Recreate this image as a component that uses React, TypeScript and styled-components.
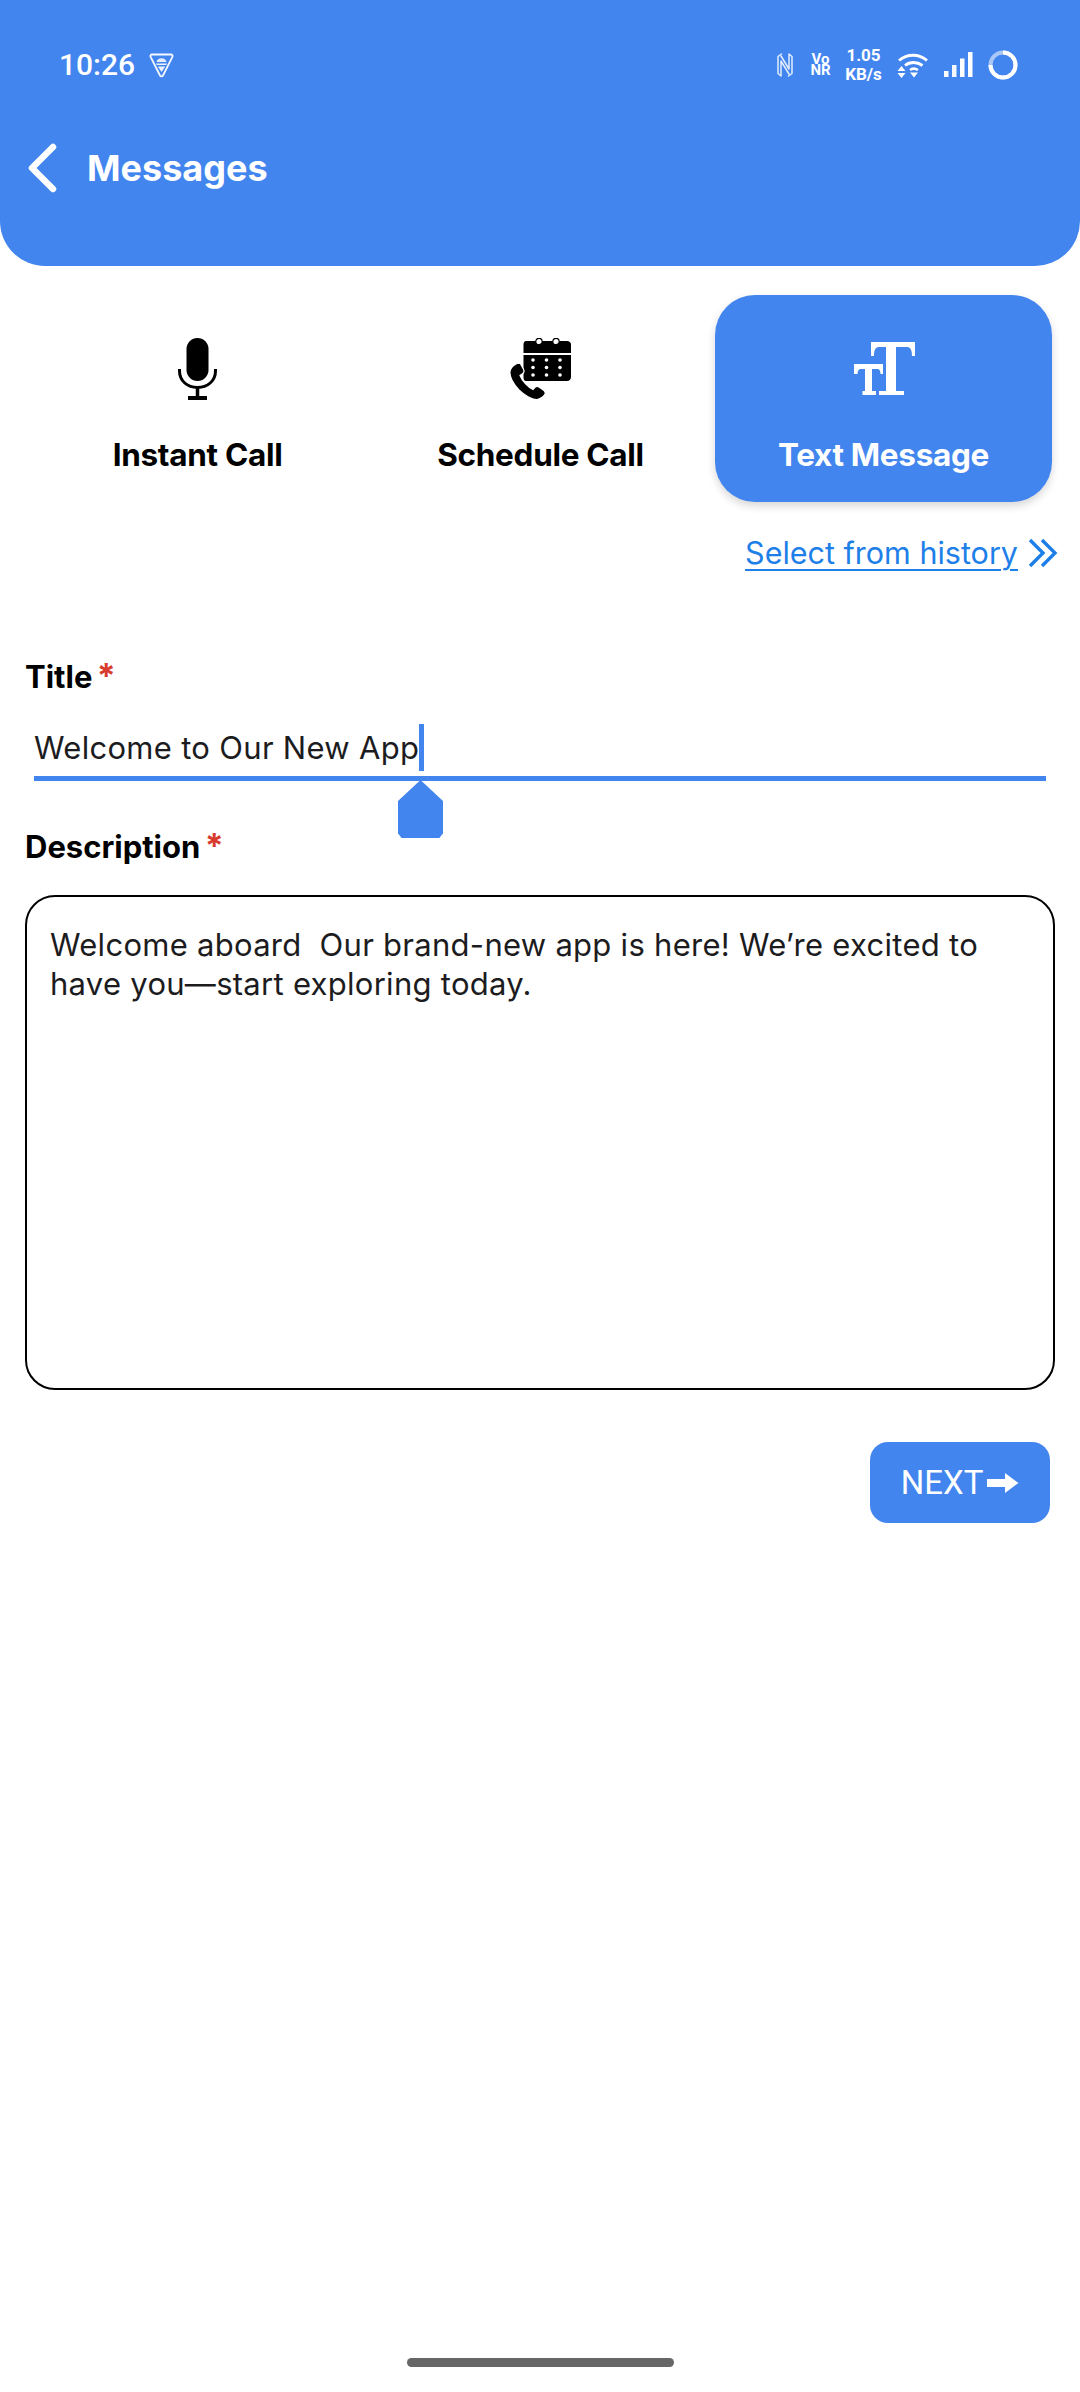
import styled, { createGlobalStyle } from 'styled-components';

const BLUE = '#4285ef';

const GlobalStyle = createGlobalStyle`
  html, body {
    margin: 0;
    padding: 0;
    background: #fff;
  }
  * {
    box-sizing: border-box;
  }
`;

function ShieldIcon() {
  return (
    <svg width="25" height="25" viewBox="0 0 25 25" fill="none">
      <path d="M3 1.500h19c1.300 0 2 1.200 1.400 2.300L14 22.500c-.7 1.200-2.300 1.200-3 0L1.600 3.800C1 2.700 1.700 1.500 3 1.500z" stroke="#fff" strokeWidth="1.800" opacity="0.95" />
      <path d="M7.500 9c.4-2.300 2.300-3.700 5-3.700s4.600 1.400 5 3.700z" fill="#fff" opacity="0.85" />
      <path d="M7 10.500h11l-.8 1.600H7.800zM8.800 13.500h7.400l-3.700 5.500z" fill="#fff" opacity="0.9" />
    </svg>
  );
}

function NfcIcon() {
  return (
    <svg width="16" height="26" viewBox="0 0 16 26" fill="none" stroke="#fff" strokeWidth="1.500" strokeLinecap="round" strokeLinejoin="round">
      <path d="M4.500 2 1 4.500v17L4 24V9l8 13" opacity="0.85" />
      <path d="M11.500 24l3.500-2.500v-17L12 2v15l-8-13" opacity="0.85" />
    </svg>
  );
}

function WifiIcon() {
  return (
    <svg width="32" height="28" viewBox="0 0 32 28" fill="none">
      <path d="M2 9.500C10 2.500 22 2.500 30 9.500" stroke="#fff" strokeWidth="2.800" />
      <path d="M8 14.500C13 10.500 20 10.500 25.500 14.500" stroke="#fff" strokeWidth="2.800" />
      <path d="M13 19c2.500-1.800 5-1.800 8 0" stroke="#fff" strokeWidth="2.600" />
      <path d="M4.500 15 8.500 20h-8zM.5 22h8l-4 5zM13 21.500h8l-4 5z" fill="#fff" />
    </svg>
  );
}

function SignalIcon() {
  return (
    <svg width="29" height="26" viewBox="0 0 29 26" fill="#fff">
      <rect x="0" y="19" width="4.500" height="6" />
      <rect x="8" y="13" width="4.500" height="12" opacity="0.95" />
      <rect x="16" y="6.500" width="4.500" height="18.500" />
      <rect x="24" y="0" width="4.500" height="25" />
    </svg>
  );
}

function BatteryRing() {
  return (
    <svg width="30" height="30" viewBox="0 0 30 30" fill="none">
      <circle cx="15" cy="15" r="12.500" stroke="#fff" strokeOpacity="0.55" strokeWidth="4" />
      <path d="M15 2.500A12.500 12.500 0 1 1 2.500 15" stroke="#fff" strokeWidth="4" />
    </svg>
  );
}

function BackIcon() {
  return (
    <svg width="30" height="50" viewBox="0 0 30 50" fill="none">
      <path d="M25 4 4 25l21 21" stroke="#fff" strokeWidth="6.500" strokeLinecap="round" strokeLinejoin="round" />
    </svg>
  );
}

function MicIcon() {
  return (
    <svg width="39" height="62" viewBox="0 0 39 62" fill="none">
      <rect x="8.500" y="0" width="22" height="43" rx="11" fill="#000" />
      <path d="M1.500 31v2c0 10 8 16.500 18 16.500S37.500 43 37.500 33v-2" stroke="#000" strokeWidth="3" />
      <path d="M19.500 49v10" stroke="#000" strokeWidth="3.500" />
      <path d="M10 60h19" stroke="#000" strokeWidth="4" />
    </svg>
  );
}

function CalendarPhoneIcon() {
  const dots = [23, 36.500, 50].flatMap((x) => [22, 29.500, 37].map((y) => ({ x, y })));
  return (
    <svg width="61" height="62" viewBox="0 0 61 62" fill="#000">
      <path d="M16 3h41c2 0 4 1.500 4 3.500V15H13.500V6.500C13.500 4.500 14.500 3 16 3z" />
      <path d="M13.500 17H61v22c0 2-1.500 4-4 4H16c-2 0-2.500-2-2.500-4z" />
      <circle cx="29" cy="3.500" r="3.200" fill="#fff" stroke="#000" strokeWidth="1.200" />
      <circle cx="46" cy="3.500" r="3.200" fill="#fff" stroke="#000" strokeWidth="1.200" />
      {dots.map((d) => (
        <circle key={`${d.x}-${d.y}`} cx={d.x} cy={d.y} r="1.800" fill="#fff" />
      ))}
      <path
        d="M7 25.500c-3 1.500-6.500 5-7 8-.6 5 3 12 9 18.500 5 5 13 10 18 9.500 3-.3 7-3 8-5.500.5-1.500 0-2.500-1-3.500l-5-3.500c-1.500-1-3-.8-4 .3l-2 2.200c-5-2.200-11-9-13-14l2.800-2c1.200-1 1.500-2.500.8-4l-3-5.500c-.5-1-1-1-1.600-.5z"
        stroke="#fff"
        strokeWidth="1.200"
      />
    </svg>
  );
}

function FontSizeIcon() {
  return (
    <svg width="62" height="54" viewBox="0 0 62 54" fill="#fff">
      <path d="M18 0h44v14h-3c0-5-1-9-5-9H43v44h8v4H26v-4h7V5H26c-4 0-5 4-5 9h-3z" />
      <path d="M1 22h29v10h-2.500c0-3-1-5-3-5H19v22h4v4H9.500v-4H12V27H8c-2.500 0-3.500 2-3.500 5H1z" />
    </svg>
  );
}

function DoubleChevronIcon() {
  return (
    <svg width="30" height="30" viewBox="0 0 30 30" fill="none" stroke="#1e7fe8" strokeWidth="3.400">
      <path d="M2 2l13 13L2 28" />
      <path d="M14 2l13 13-13 13" />
    </svg>
  );
}

function ArrowIcon() {
  return (
    <svg width="32" height="20" viewBox="0 0 32 20" fill="#fff">
      <path d="M0 6h18V0l13.500 10L18 20v-6H0z" />
    </svg>
  );
}

export default function App() {
  return (
    <Page>
      <GlobalStyle />
      <Header>
        <StatusBar>
          <StatusLeft>
            <Clock>10:26</Clock>
            <ShieldIcon />
          </StatusLeft>
          <StatusRight>
            <NfcIcon />
            <VoNrText>
              Vo
              <br />
              NR
            </VoNrText>
            <SpeedText>
              1.05
              <br />
              KB/s
            </SpeedText>
            <WifiIcon />
            <SignalIcon />
            <BatteryRing />
          </StatusRight>
        </StatusBar>
        <TitleRow>
          <BackIcon />
          <PageTitle>Messages</PageTitle>
        </TitleRow>
      </Header>

      <Tabs>
        <Tab>
          <TabIcon>
            <MicIcon />
          </TabIcon>
          <TabLabel>Instant Call</TabLabel>
        </Tab>
        <Tab>
          <TabIcon>
            <CalendarPhoneIcon />
          </TabIcon>
          <TabLabel>Schedule Call</TabLabel>
        </Tab>
        <Tab $active>
          <TabIcon>
            <FontSizeIcon />
          </TabIcon>
          <TabLabel>Text Message</TabLabel>
        </Tab>
      </Tabs>

      <HistoryRow>
        <HistoryLink>Select from history</HistoryLink>
        <DoubleChevronIcon />
      </HistoryRow>

      <Form>
        <FieldLabel>
          Title <Required>*</Required>
        </FieldLabel>
        <TitleInput>
          <InputText>Welcome to Our New App</InputText>
          <Cursor />
          <CursorHandle />
        </TitleInput>
        <DescriptionLabel>
          Description <Required>*</Required>
        </DescriptionLabel>
        <DescriptionBox>
          Welcome aboard&nbsp; Our brand-new app is here! We’re excited to have you—start exploring today.
        </DescriptionBox>
        <Actions>
          <NextButton>
            NEXT
            <ArrowIcon />
          </NextButton>
        </Actions>
      </Form>

      <HomeBar />
    </Page>
  );
}

const Page = styled.div`
  width: 1080px;
  height: 2392px;
  display: flex;
  flex-direction: column;
  background: #fff;
  font-family: Inter, 'Liberation Sans', sans-serif;
  overflow: hidden;
`;

const Header = styled.header`
  height: 266px;
  flex: none;
  padding: 45px 62px 0 28px;
  background: ${BLUE};
  border-radius: 0 0 45px 45px;
  color: #fff;
`;

const StatusBar = styled.div`
  display: flex;
  align-items: center;
  justify-content: space-between;
  height: 40px;
  padding-left: 31px;
`;

const StatusLeft = styled.div`
  display: flex;
  align-items: center;
  gap: 14px;
`;

const Clock = styled.span`
  font-family: Roboto, sans-serif;
  font-size: 30px;
  font-weight: 500;
  line-height: 40px;
`;

const StatusRight = styled.div`
  display: flex;
  align-items: center;
  gap: 15px;
`;

const VoNrText = styled.span`
  width: 21px;
  margin: 0 -1px 0 2px;
  display: block;
  font-family: Roboto, sans-serif;
  font-size: 15px;
  font-weight: 700;
  line-height: 11.500px;
  text-align: center;
`;

const SpeedText = styled.span`
  width: 37px;
  display: block;
  font-family: Roboto, sans-serif;
  font-size: 17px;
  font-weight: 700;
  line-height: 19px;
  text-align: center;
  white-space: nowrap;
`;

const TitleRow = styled.div`
  display: flex;
  align-items: center;
  gap: 29px;
  margin-top: 58px;
  height: 50px;
`;

const PageTitle = styled.h1`
  margin: 0;
  font-size: 36px;
  font-weight: 700;
  line-height: 50px;
`;

const Tabs = styled.div`
  display: grid;
  grid-template-columns: repeat(3, 337px);
  gap: 6px;
  padding: 29px 0 0 29px;
`;

const Tab = styled.div<{ $active?: boolean }>`
  height: 207px;
  display: flex;
  flex-direction: column;
  align-items: center;
  border-radius: 40px;
  color: ${(props) => (props.$active ? '#fff' : '#000')};
  background: ${(props) => (props.$active ? BLUE : 'transparent')};
  box-shadow: ${(props) => (props.$active ? '0 4px 8px rgba(0, 0, 0, 0.16)' : 'none')};
`;

const TabIcon = styled.div`
  height: 62px;
  margin-top: 43px;
  display: flex;
  align-items: center;
  justify-content: center;
`;

const TabLabel = styled.div`
  margin-top: 35px;
  font-size: 31.500px;
  font-weight: 700;
  line-height: 40px;
  letter-spacing: -0.3px;
`;

const HistoryRow = styled.div`
  display: flex;
  align-items: center;
  justify-content: flex-end;
  gap: 10px;
  height: 44px;
  margin-top: 29px;
  padding-right: 22px;
`;

const HistoryLink = styled.span`
  color: #1e7fe8;
  font-size: 30.500px;
  line-height: 44px;
  text-decoration: underline;
  text-underline-offset: 5px;
  text-decoration-thickness: 2px;
`;

const Form = styled.div`
  display: flex;
  flex-direction: column;
  padding: 0 25px;
  margin-top: 82px;
`;

const FieldLabel = styled.div`
  font-size: 31px;
  font-weight: 700;
  line-height: 40px;
  color: #000;
`;

const Required = styled.span`
  margin-left: -3px;
  color: #d93a2e;
  font-size: 34px;
  line-height: 0;
`;

const TitleInput = styled.div`
  position: relative;
  display: flex;
  align-items: center;
  height: 68px;
  margin: 16px 9px 0;
  border-bottom: 5px solid ${BLUE};
  padding-top: 6px;
`;

const InputText = styled.span`
  font-size: 31px;
  line-height: 48px;
  letter-spacing: 0.3px;
  color: #1c1c1e;
`;

const Cursor = styled.span`
  width: 5px;
  height: 47px;
  background: ${BLUE};
`;

const CursorHandle = styled.span`
  position: absolute;
  left: 364px;
  top: 67px;
  width: 45px;
  height: 58px;
  background: ${BLUE};
  clip-path: polygon(50% 0, 100% 36%, 100% 92%, 92% 100%, 8% 100%, 0 92%, 0 36%);
`;

const DescriptionLabel = styled(FieldLabel)`
  margin-top: 46px;
`;

const DescriptionBox = styled.div`
  height: 495px;
  margin-top: 28px;
  padding: 28px 23px;
  border: 2.500px solid #000;
  border-radius: 30px;
  font-size: 31px;
  line-height: 39px;
  letter-spacing: 0.28px;
  color: #1c1c1e;
`;

const Actions = styled.div`
  display: flex;
  justify-content: flex-end;
  margin-top: 52px;
  padding-right: 5px;
`;

const NextButton = styled.div`
  width: 180px;
  height: 81px;
  display: flex;
  align-items: center;
  justify-content: center;
  gap: 4px;
  border-radius: 18px;
  background: ${BLUE};
  color: #fff;
  font-family: Roboto, sans-serif;
  font-size: 33px;
`;

const HomeBar = styled.div`
  width: 267px;
  height: 9px;
  margin: auto auto 25px;
  border-radius: 5px;
  background: #666;
`;
